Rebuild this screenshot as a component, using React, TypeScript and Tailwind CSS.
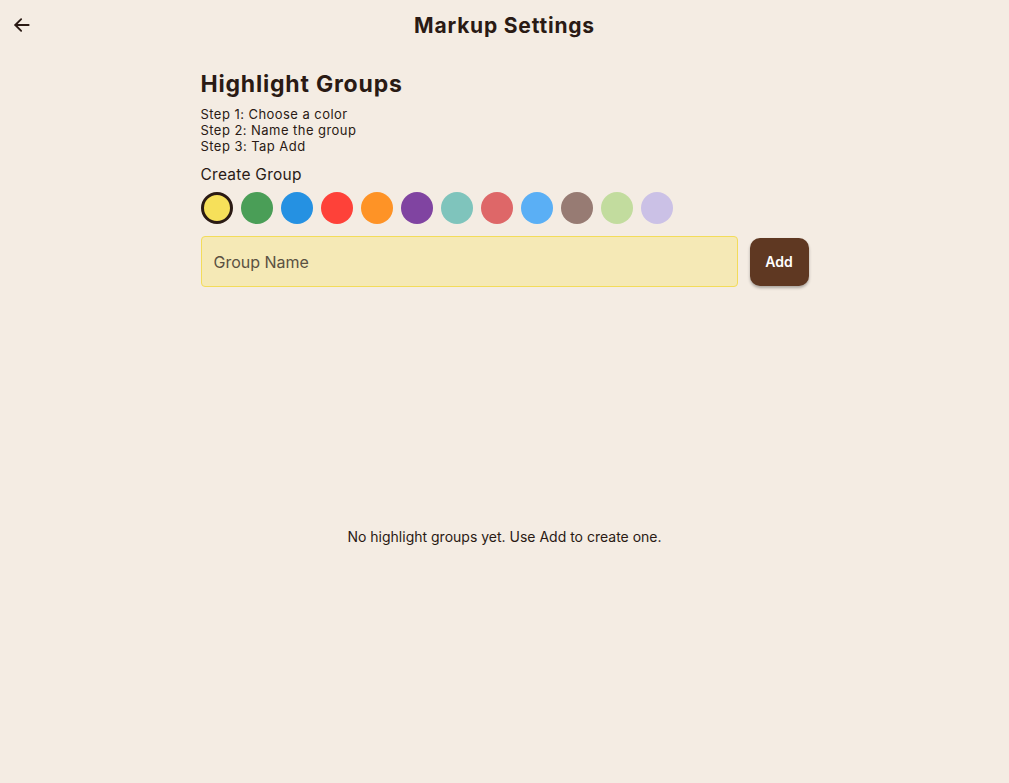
import React, { useState } from 'react';

const COLORS = [
  '#f6e05a',
  '#4a9e57',
  '#2591e2',
  '#fe4139',
  '#fe9326',
  '#8044a1',
  '#7fc4bc',
  '#de6768',
  '#5aaff5',
  '#977b73',
  '#c2dc9e',
  '#cbc1e6',
];

const App: React.FC = () => {
  const [selected, setSelected] = useState(0);
  const [name, setName] = useState('');

  return (
    <div
      className="min-h-[783px] flex flex-col bg-[#f4ece3] text-[#2a1a14]"
      style={{ fontFamily: 'Inter, "Noto Sans", sans-serif' }}
    >
      {/* Top bar */}
      <div className="relative h-[50px] flex items-center justify-center">
        <button type="button" className="absolute left-[10px] top-[13px] w-6 h-6 flex items-center justify-center">
          <svg width="20" height="20" viewBox="0 0 24 24" fill="none" stroke="#2a1a14" strokeWidth="2.2" strokeLinecap="round" strokeLinejoin="round">
            <path d="M20 12H4" />
            <path d="M11 5l-7 7 7 7" />
          </svg>
        </button>
        <h1 className="mt-[2px] text-[21px] font-bold tracking-[0.8px]">Markup Settings</h1>
      </div>

      {/* Content */}
      <div className="w-[608px] mx-auto flex-1 flex flex-col">
        <h2 className="mt-[19px] text-[23px] leading-[30px] font-bold tracking-[0.8px]">Highlight Groups</h2>
        <div className="mt-[7px] text-[13px] leading-[16px] tracking-[0.45px]">
          <p>Step 1: Choose a color</p>
          <p>Step 2: Name the group</p>
          <p>Step 3: Tap Add</p>
        </div>
        <p className="mt-[11px] text-[15.5px] leading-[20px] tracking-[0.25px]">Create Group</p>

        <div className="mt-[7px] flex gap-2">
          {COLORS.map((c, i) => (
            <button
              key={c}
              type="button"
              onClick={() => setSelected(i)}
              className={`w-8 h-8 rounded-full ${i === selected ? 'border-[3px] border-[#2a1a14]' : ''}`}
              style={{ backgroundColor: c }}
            />
          ))}
        </div>

        <div className="mt-3 flex items-center gap-3">
          <input
            value={name}
            onChange={(e) => setName(e.target.value)}
            placeholder="Group Name"
            className="flex-1 h-[51px] px-3 rounded-[4px] border border-[#f3dc5a] bg-[#f5e9b6] text-[16px] outline-none placeholder:text-[#5a5142]"
          />
          <button
            type="button"
            className="w-[59px] h-[48px] rounded-[10px] bg-[#5f3822] text-white text-[14px] font-semibold shadow-[0_2px_3px_rgba(0,0,0,0.3)]"
          >
            Add
          </button>
        </div>

        <div className="flex-1 flex items-center justify-center">
          <p className="text-[14px] pt-[2px]">No highlight groups yet. Use Add to create one.</p>
        </div>
      </div>
    </div>
  );
};

export default App;
